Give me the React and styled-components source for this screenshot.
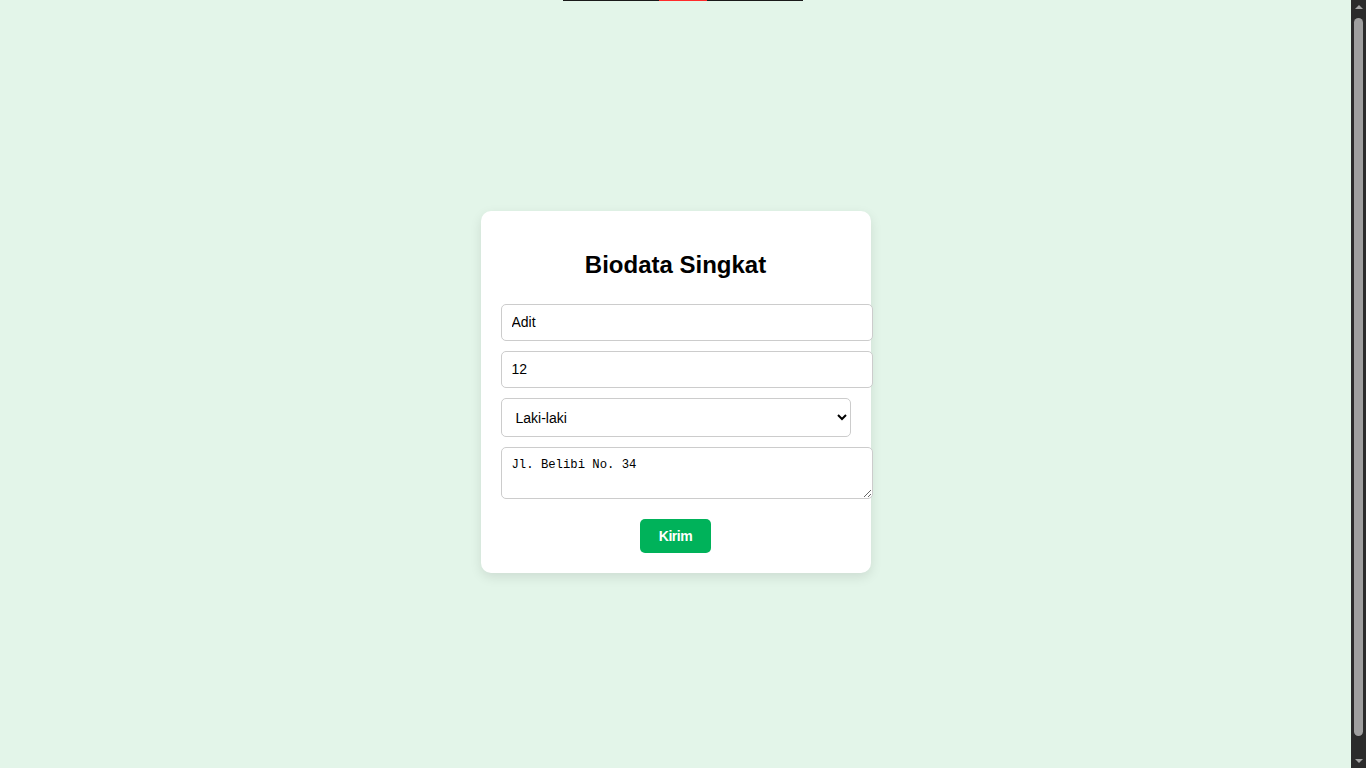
import React from 'react';
import styled, { createGlobalStyle } from 'styled-components';

const GlobalStyle = createGlobalStyle`
  html, body {
    margin: 0;
    padding: 0;
    background: #e3f5e9;
    font-family: 'Liberation Sans', Arial, sans-serif;
  }
`;

const Page = styled.div`
  height: 768px;
  display: flex;
  overflow: hidden;
`;

const Viewport = styled.div`
  flex: 1;
  display: flex;
  flex-direction: column;
  align-items: center;
`;

const TopLine = styled.div`
  display: flex;
  flex-shrink: 0;
  width: 240px;
  height: 1px;
  margin-left: 15px;
  background: #1a1a1a;
  justify-content: center;
`;

const Accent = styled.span`
  width: 48px;
  background: #ff2a2a;
`;

const Stage = styled.main`
  flex-shrink: 0;
  height: 782px;
  display: flex;
  align-items: center;
  justify-content: center;
`;

const Card = styled.form`
  width: 350px;
  padding: 20px;
  background: #fff;
  border-radius: 10px;
  box-shadow: 0 4px 12px rgba(0, 0, 0, 0.1);
  display: flex;
  flex-direction: column;
  align-items: flex-start;
`;

const Title = styled.h2`
  align-self: stretch;
  margin: 20px 0 25px;
  font-size: 24px;
  line-height: 28px;
  text-align: center;
  color: #000;
`;

const Field = styled.input`
  width: 100%;
  margin-bottom: 10px;
  padding: 10px;
  border: 1px solid #ccc;
  border-radius: 5px;
  font-family: 'Liberation Sans', Arial, sans-serif;
  font-size: 14px;
  line-height: 15px;
  color: #000;
  background: #fff;
  outline: none;
`;

const Choice = styled.select`
  width: 350px;
  height: 39px;
  margin-bottom: 10px;
  padding: 0 10px;
  border: 1px solid #ccc;
  border-radius: 5px;
  font-family: 'Liberation Sans', Arial, sans-serif;
  font-size: 14px;
  color: #000;
  background: #fff;
  outline: none;
`;

const Note = styled.textarea`
  width: 100%;
  height: 30px;
  padding: 10px;
  border: 1px solid #ccc;
  border-radius: 5px;
  font-family: 'Liberation Mono', 'Courier New', monospace;
  font-size: 12.25px;
  line-height: 15px;
  color: #000;
  background: #fff;
  outline: none;
`;

const Submit = styled.button`
  align-self: center;
  margin-top: 20px;
  height: 34px;
  padding: 0 19px;
  border: none;
  border-radius: 5px;
  background: #00b25a;
  color: #fff;
  font-family: 'Liberation Sans', Arial, sans-serif;
  font-size: 14px;
  font-weight: bold;
  letter-spacing: -0.5px;
  cursor: pointer;
`;

const ScrollTrack = styled.div`
  width: 15px;
  flex-shrink: 0;
  background: #2b2b2b;
  display: flex;
  flex-direction: column;
  align-items: center;
`;

const Arrow = styled.div`
  width: 0;
  height: 0;
  margin: ${p => (p.$down ? '6px 0 5px' : '5px 0 6px')};
  border-left: 4px solid transparent;
  border-right: 4px solid transparent;
  ${p => (p.$down ? 'border-top' : 'border-bottom')}: 4px solid #a3a3a3;
`;

const Thumb = styled.div`
  width: 9px;
  height: 718px;
  margin-top: 3px;
  border-radius: 5px;
  background: #9f9f9f;
`;

const Spacer = styled.div`
  flex: 1;
`;

const App = () =>
  <Page>
    <GlobalStyle />
    <Viewport>
      <TopLine>
        <Accent />
      </TopLine>
      <Stage>
        <Card onSubmit={e => e.preventDefault()}>
          <Title>Biodata Singkat</Title>
          <Field type="text" defaultValue="Adit" />
          <Field type="number" defaultValue="12" />
          <Choice defaultValue="Laki-laki">
            <option>Laki-laki</option>
            <option>Perempuan</option>
          </Choice>
          <Note defaultValue="Jl. Belibi No. 34" />
          <Submit type="submit">Kirim</Submit>
        </Card>
      </Stage>
    </Viewport>
    <ScrollTrack>
      <Arrow />
      <Thumb />
      <Spacer />
      <Arrow $down />
    </ScrollTrack>
  </Page>
;

export default App;
